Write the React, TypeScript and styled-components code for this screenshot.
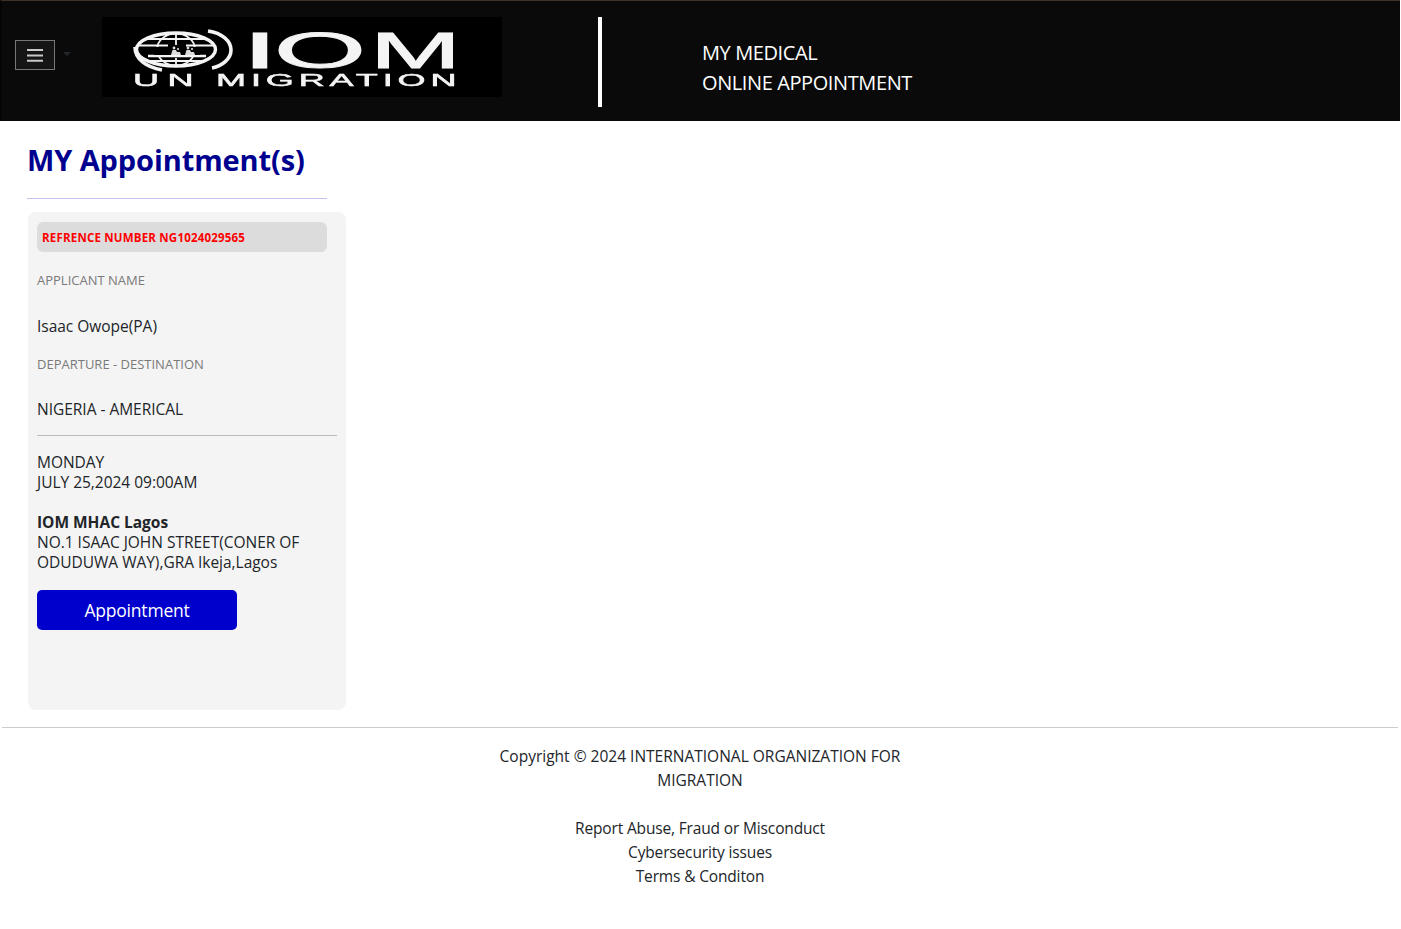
import React from "react";
import styled, { createGlobalStyle } from "styled-components";

const Global = createGlobalStyle`
  html, body { margin: 0; padding: 0; background: #fff; }
  body { font-family: "Open Sans", "Noto Sans", "Liberation Sans", sans-serif; color: #212529; }
  * { box-sizing: border-box; }
`;

const Page = styled.div`
  width: 1401px;
  height: 929px;
  overflow: hidden;
`;

const Header = styled.header`
  width: 1400px;
  height: 121px;
  background: #0a0a0a;
  border-top: 1px solid #3d3229;
  border-left: 2px solid #050505;
  display: flex;
  align-items: flex-start;
  padding: 16px 0 0 13px;
`;

const MenuGroup = styled.div`
  display: flex;
  align-items: center;
  width: 87px;
  margin-top: 23px;
`;

const MenuButton = styled.button`
  width: 40px;
  height: 30px;
  padding: 0;
  background: #151515;
  border: 1px solid #777;
  display: flex;
  align-items: center;
  justify-content: center;
`;

const Caret = styled.span`
  width: 0;
  height: 0;
  margin-left: 8px;
  margin-top: -3px;
  border-left: 4px solid transparent;
  border-right: 4px solid transparent;
  border-top: 4px solid #23282c;
`;

const LogoBox = styled.svg`
  display: block;
  width: 400px;
  height: 80px;
  background: #000;
`;

const Divider = styled.div`
  width: 4px;
  height: 90px;
  margin-left: 96px;
  background: #fff;
`;

const Title = styled.div`
  margin: 21px 0 0 100px;
  color: #fff;
  font-size: 20px;
  line-height: 30px;
  letter-spacing: -0.4px;
`;

const Main = styled.main`
  height: 606px;
  padding: 19px 0 0 28px;
`;

const Heading = styled.h1`
  margin: 0 0 0 -1px;
  color: #00008f;
  font-size: 29px;
  line-height: 40px;
  font-weight: 700;
  letter-spacing: -0.1px;
`;

const HeadingRule = styled.hr`
  width: 300px;
  height: 1px;
  margin: 18px 0 13px -1px;
  border: 0;
  background: #c2c2ec;
`;

const Card = styled.section`
  width: 318px;
  height: 498px;
  padding: 10px 9px;
  background: #f4f4f4;
  border-radius: 8px;
`;

const RefBar = styled.div`
  width: 290px;
  height: 30px;
  padding-left: 5px;
  background: #dcdcdc;
  border-radius: 6px;
  color: #f00;
  font-size: 11.5px;
  font-weight: 700;
  line-height: 31px;
  letter-spacing: 0.2px;
`;

const Label = styled.div<{ $top: number }>`
  margin-top: ${(p) => p.$top}px;
  color: #7a7a7a;
  font-size: 13px;
  line-height: 20px;
  font-weight: 500;
`;

const Value = styled.div<{ $top: number }>`
  margin-top: ${(p) => p.$top}px;
  font-size: 15.5px;
  line-height: 20px;
  letter-spacing: -0.02px;
`;

const CardRule = styled.hr`
  width: 300px;
  height: 1px;
  margin: 16px 0 0;
  border: 0;
  background: #bbb;
`;

const Venue = styled.strong`
  display: block;
  font-weight: 700;
`;

const ActionButton = styled.button`
  display: block;
  width: 200px;
  height: 40px;
  margin-top: 18px;
  padding: 0;
  border: 0;
  border-radius: 5px;
  background: #0000cd;
  color: #fff;
  font-family: inherit;
  font-size: 17.5px;
  letter-spacing: -0.2px;
`;

const Footer = styled.footer`
  margin: 0 3px 0 2px;
  border-top: 1px solid #ccc;
  padding-top: 16px;
  text-align: center;
  font-size: 15.5px;
  line-height: 24px;
  letter-spacing: 0;
`;

const FooterText = styled.div`
  width: 420px;
  margin: 0 auto;
`;

const FooterLinks = styled.div`
  margin-top: 24px;
  letter-spacing: -0.15px;
`;

const Logo = () => (
  <LogoBox viewBox="0 0 400 80" role="img" aria-label="IOM UN Migration">
    <defs>
      <filter id="soft" x="-5%" y="-5%" width="110%" height="110%">
        <feGaussianBlur stdDeviation="0.7" />
      </filter>
    </defs>
    <g filter="url(#soft)" fill="none" stroke="#f4f4f4">
      <ellipse cx="74" cy="32.5" rx="39.5" ry="16.5" strokeWidth="3.4" />
      <ellipse cx="74" cy="32.5" rx="19" ry="16" strokeWidth="1.8" />
      <path d="M74 16V28M74 41V49M42 22H106M37 28.5H66M84 28.5H111M44 44H104" strokeWidth="1.8" />
      <path d="M46 39H104" strokeWidth="2.6" />
      <path d="M52 30H98V38H52Z" fill="#000" stroke="none" />
      <g fill="#dcdcdc" stroke="none">
        <circle cx="72" cy="31" r="1.4" />
        <circle cx="76" cy="32" r="1.1" />
        <circle cx="86" cy="31" r="1.4" />
        <circle cx="90" cy="32" r="1.1" />
        <path d="M69 38L70.5 33H74L75 35H78L79 38ZM83 38L84.5 33H88L89 35H92L93 38Z" />
      </g>
      <path d="M33 30C33 42 44 50 60 53" strokeWidth="3.6" />
      <path d="M106 14C120 16 129 24 129 33C129 42 120 49 110 51" strokeWidth="3.6" />
      <g stroke="none" fill="#f4f4f4">
        <text
          y="51"
          fontFamily="'Liberation Sans', sans-serif"
          fontSize="50"
          stroke="#f4f4f4"
          strokeWidth="0.9"
        >
          <tspan x="140" textLength="36" lengthAdjust="spacingAndGlyphs">I</tspan>
          <tspan x="172" textLength="92" lengthAdjust="spacingAndGlyphs">O</tspan>
          <tspan x="268" textLength="91" lengthAdjust="spacingAndGlyphs">M</tspan>
        </text>
        <text
          transform="scale(2.12 1)"
          y="69"
          fontFamily="'Liberation Sans', sans-serif"
          fontSize="17"
          stroke="#f4f4f4"
          strokeWidth="0.5"
        >
          <tspan x="14.6" letterSpacing="4">UN</tspan>
          <tspan x="53.8" letterSpacing="2.3">MIGRATION</tspan>
        </text>
      </g>
    </g>
  </LogoBox>
);

export default function App() {
  return (
    <Page>
      <Global />
      <Header>
        <MenuGroup>
          <MenuButton aria-label="Menu">
            <svg width="16" height="13" viewBox="0 0 16 13">
              <path d="M0 1H16M0 6.4H16M0 11.8H16" stroke="#c8c8c8" strokeWidth="2" />
            </svg>
          </MenuButton>
          <Caret />
        </MenuGroup>
        <Logo />
        <Divider />
        <Title>
          MY MEDICAL
          <br />
          ONLINE APPOINTMENT
        </Title>
      </Header>
      <Main>
        <Heading>MY Appointment(s)</Heading>
        <HeadingRule />
        <Card>
          <RefBar>REFRENCE NUMBER NG1024029565</RefBar>
          <Label $top={18}>APPLICANT NAME</Label>
          <Value $top={26}>Isaac Owope(PA)</Value>
          <Label $top={18}>DEPARTURE - DESTINATION</Label>
          <Value $top={25}>NIGERIA - AMERICAL</Value>
          <CardRule />
          <Value $top={16}>
            MONDAY
            <br />
            JULY 25,2024 09:00AM
          </Value>
          <Value $top={20}>
            <Venue>IOM MHAC Lagos</Venue>
            NO.1 ISAAC JOHN STREET(CONER OF
            <br />
            ODUDUWA WAY),GRA Ikeja,Lagos
          </Value>
          <ActionButton>Appointment</ActionButton>
        </Card>
      </Main>
      <Footer>
        <FooterText>
          Copyright © 2024 INTERNATIONAL ORGANIZATION FOR MIGRATION
          <FooterLinks>
            Report Abuse, Fraud or Misconduct
            <br />
            Cybersecurity issues
            <br />
            Terms &amp; Conditon
          </FooterLinks>
        </FooterText>
      </Footer>
    </Page>
  );
}
